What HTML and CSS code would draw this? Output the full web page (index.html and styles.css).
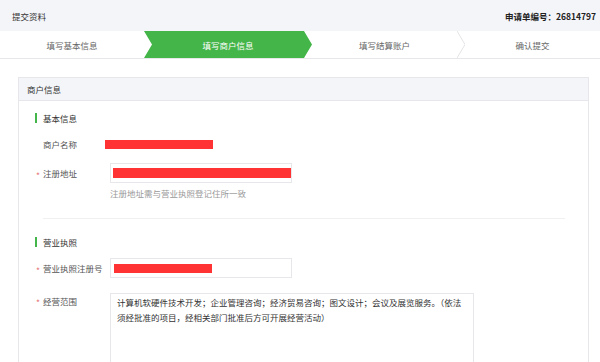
FILE: index.html
```html
<!DOCTYPE html>
<html>
<head>
    <meta charset="utf-8">
    <link rel="stylesheet" href="styles.css">
</head>
<body>

    <div class="topbar">
        <span class="topbar-title">提交资料</span>
        <span class="topbar-order">申请单编号：26814797</span>
    </div>

    <div class="steps">
        <div class="step step-first">填写基本信息</div>
        <div class="step step-active">填写商户信息</div>
        <div class="step step-third">填写结算账户</div>
        <svg class="step-sep" width="8" height="27" viewBox="0 0 8 27">
            <polyline points="0,0 8,13.5 0,27" fill="none" stroke="#e4e4e8" stroke-width="1"/>
        </svg>
        <div class="step step-last">确认提交</div>
    </div>

    <div class="card">
        <div class="card-header">商户信息</div>
        <div class="card-body">

            <div class="section-title">基本信息</div>

            <div class="row row-name">
                <div class="label">商户名称</div>
                <div class="value"><div class="mask mask-name"></div></div>
            </div>

            <div class="row row-address">
                <div class="label"><span class="star">*</span>注册地址</div>
                <div class="input"><div class="mask mask-address"></div></div>
            </div>
            <div class="hint">注册地址需与营业执照登记住所一致</div>

            <div class="divider"></div>

            <div class="section-title">营业执照</div>

            <div class="row row-license">
                <div class="label"><span class="star">*</span>营业执照注册号</div>
                <div class="input"><div class="mask mask-license"></div></div>
            </div>

            <div class="row row-scope">
                <div class="label label-top"><span class="star">*</span>经营范围</div>
                <textarea class="textarea" readonly>计算机软硬件技术开发；企业管理咨询；经济贸易咨询；图文设计；会议及展览服务。（依法须经批准的项目，经相关部门批准后方可开展经营活动）</textarea>
            </div>

        </div>
    </div>

</body>
</html>
```

FILE: styles.css
```css
body {
    margin: 0;
    background-color: #ffffff;
    font-family: "Noto Sans CJK SC", "Liberation Sans", sans-serif;
    font-size: 8.5px;
    color: #333333;
}

.topbar {
    background-color: #f4f5f9;
    height: 31px;
    display: flex;
    align-items: center;
    justify-content: space-between;
    padding: 0 4px 0 12px;
}

.topbar-order {
    color: #222222;
    font-weight: bold;
}

.steps {
    display: flex;
    height: 27px;
    border-bottom: 1px solid #e7e7eb;
    background-color: #ffffff;
}

.step {
    display: flex;
    align-items: center;
    justify-content: center;
    color: #666666;
    box-sizing: border-box;
}

.step-first {
    width: 144px;
}

.step-active {
    width: 168px;
    padding: 0 8px;
    background-color: #44b549;
    color: #ffffff;
    clip-path: polygon(0 0, calc(100% - 8px) 0, 100% 50%, calc(100% - 8px) 100%, 0 100%, 8px 50%);
}

.step-third {
    width: 145px;
}

.step-sep {
    display: block;
    flex: none;
}

.step-last {
    flex: 1;
}

.card {
    margin: 18px 11px 0 18px;
    border: 1px solid #e7e7eb;
    border-bottom: none;
    height: 300px;
}

.card-header {
    background-color: #f4f5f9;
    height: 22px;
    line-height: 22px;
    border-bottom: 1px solid #e7e7eb;
    padding-left: 8px;
}

.card-body {
    padding: 12px 23px 0 16px;
}

.section-title {
    height: 10px;
    line-height: 10px;
    border-left: 2px solid #44b549;
    padding-left: 6px;
    color: #333333;
}

.row {
    display: flex;
    align-items: center;
}

.label {
    width: 67px;
    padding-left: 8px;
    flex: none;
    color: #555555;
    position: relative;
}

.star {
    position: absolute;
    left: 1px;
    top: 2px;
    color: #e8777a;
}

.row-name {
    height: 20px;
    margin-top: 11px;
}

.value {
    margin-left: -5px;
}

.mask {
    background-color: #ff3333;
}

.mask-name {
    width: 108px;
    height: 9px;
}

.row-address {
    margin-top: 9px;
}

.input {
    width: 182px;
    height: 20px;
    box-sizing: border-box;
    border: 1px solid #e7e7eb;
    display: flex;
    align-items: center;
}

.mask-address {
    margin-left: 2px;
    width: 178px;
    height: 10px;
}

.mask-license {
    margin-left: 3px;
    width: 98px;
    height: 9px;
}

.hint {
    margin: 4px 0 0 75px;
    height: 12px;
    line-height: 12px;
    color: #999999;
}

.divider {
    margin: 19px 0 18px 8px;
    border-top: 1px solid #f0f0f2;
}

.row-license {
    margin-top: 11px;
}

.row-scope {
    margin-top: 15px;
    align-items: flex-start;
}

.label-top {
    line-height: 15px;
    padding-top: 1px;
}

.textarea {
    width: 364px;
    height: 90px;
    box-sizing: border-box;
    border: 1px solid #e7e7eb;
    padding: 1px 6px;
    margin: 0;
    font-family: inherit;
    font-size: 8.5px;
    line-height: 14.5px;
    color: #333333;
    resize: none;
    overflow: hidden;
    outline: none;
}
```
